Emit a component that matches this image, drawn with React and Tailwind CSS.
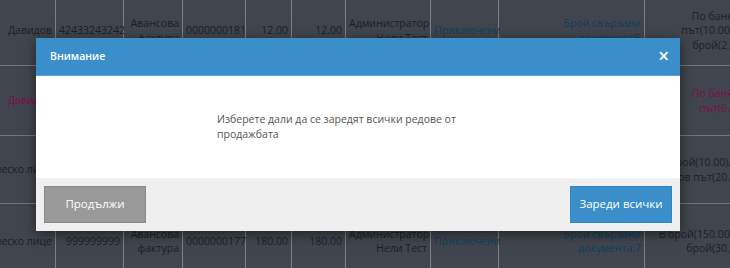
import React from 'react';

const rows = [
  {
    h: 'h-[70px]',
    pink: false,
    cells: ['Давидов', '42433243242', 'Авансова фактура', '0000000181', '12.00', '12.00', 'Администратор Нели Тест', 'Приключени', 'Брой свързани документа:5', 'По банков път(10.00), В брой(2.00)'],
  },
  {
    h: 'h-[70px]',
    pink: true,
    cells: ['Давидов', '42433243242', 'Фактура', '0000000180', '6.00', '6.00', 'Администратор Нели Тест', 'Приключени', 'Брой свързани документа:2', 'По банков път(6.00)'],
  },
  {
    h: 'h-[68px]',
    pink: false,
    cells: ['Физическо лице', '999999999', 'Фактура', '0000000179', '30.00', '30.00', 'Администратор Нели Тест', 'Приключени', 'Брой свързани документа:3', 'В брой(10.00),По банков път(20.00)'],
  },
  {
    h: 'h-[75px]',
    pink: false,
    cells: ['Физическо лице', '999999999', 'Авансова фактура', '0000000177', '180.00', '180.00', 'Администратор Нели Тест', 'Приключени', 'Брой свързани документа:7', 'В брой(150.00), В брой(30.00)'],
  },
];

const widths = ['w-[100px]', 'w-[68px]', 'w-[59px]', 'w-[63px]', 'w-[46px]', 'w-[54px]', 'w-[85px]', 'w-[68px]', 'w-[146px]', 'w-[104px]'];

export default function App() {
  return (
    <div className="relative w-[730px] h-[268px] overflow-hidden bg-gray-500 font-['Open_Sans',sans-serif] text-[10.5px] leading-[14.5px]">
      {/* table behind the dialog */}
      <div className="-ml-[45px] -mt-[5px]">
        <table className="table-fixed border-collapse w-[793px]">
          <tbody>
            {rows.map((row, ri) => (
              <tr key={ri} className={`${row.h} border-t border-gray-300`}>
                {row.cells.map((c, ci) => {
                  let color = row.pink ? 'text-pink-600' : 'text-gray-800';
                  if (!row.pink && (ci === 7 || ci === 8)) color = 'text-sky-700';
                  return (
                    <td key={ci} className={`${widths[ci]} border-x border-gray-200 px-[3px] align-middle text-right ${color}`}>
                      {ci === 0 ? (
                        <div className="flex justify-end overflow-hidden whitespace-nowrap">{c}</div>
                      ) : (
                        c
                      )}
                    </td>
                  );
                })}
              </tr>
            ))}
          </tbody>
        </table>
      </div>

      {/* modal backdrop */}
      <div className="absolute inset-0 z-10 bg-neutral-900/50"></div>

      <div className="absolute left-[36px] top-[38px] z-20 w-[644px] shadow-[0_3px_12px_rgba(0,0,0,0.5)]">
        <div className="h-[38px] bg-[#3a8fca] border-b border-[#5aa2d6] flex items-center justify-between pl-[14px] pr-[11px]">
          <span className="text-white text-[10.5px] font-semibold">Внимание</span>
          <span className="text-white text-[19px] leading-none font-semibold">×</span>
        </div>
        <div className="h-[102px] bg-white flex items-center justify-center">
          <p className="w-[282px] text-[#555555] text-[10.5px] leading-[15px]">
            Изберете дали да се заредят всички редове от продажбата
          </p>
        </div>
        <div className="h-[53px] bg-[#efefef] flex items-center justify-between px-[8px]">
          <button className="w-[102px] h-[37px] bg-[#999999] border border-[#8a8a8a] text-white text-[11.5px]">
            Продължи
          </button>
          <button className="w-[102px] h-[37px] bg-[#3a8fca] border border-[#2f86c4] text-white text-[11.5px]">
            Зареди всички
          </button>
        </div>
      </div>
    </div>
  );
}
